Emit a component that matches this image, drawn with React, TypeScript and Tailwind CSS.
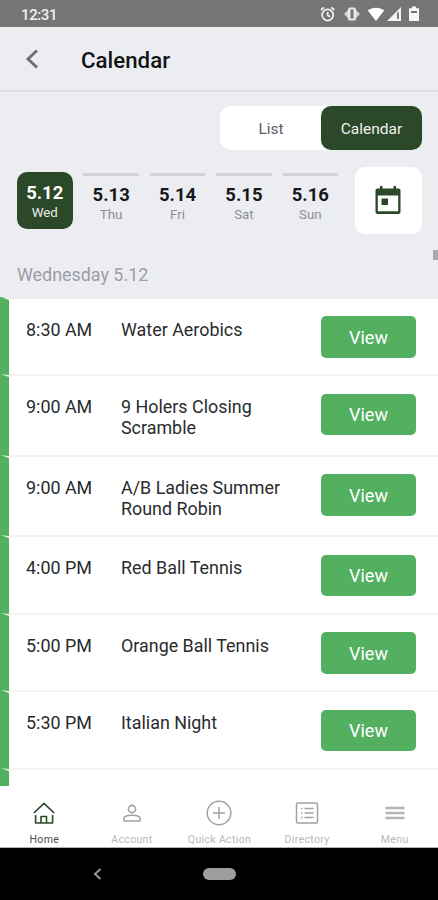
import clsx from "clsx";

interface Day {
  date: string;
  name: string;
}

interface CalendarEvent {
  time: string;
  lines: string[];
}

const days: Day[] = [
  { date: "5.12", name: "Wed" },
  { date: "5.13", name: "Thu" },
  { date: "5.14", name: "Fri" },
  { date: "5.15", name: "Sat" },
  { date: "5.16", name: "Sun" },
];

const events: CalendarEvent[] = [
  { time: "8:30 AM", lines: ["Water Aerobics"] },
  { time: "9:00 AM", lines: ["9 Holers Closing", "Scramble"] },
  { time: "9:00 AM", lines: ["A/B Ladies Summer", "Round Robin"] },
  { time: "4:00 PM", lines: ["Red Ball Tennis"] },
  { time: "5:00 PM", lines: ["Orange Ball Tennis"] },
  { time: "5:30 PM", lines: ["Italian Night"] },
];

function StatusBar() {
  return (
    <div className="flex h-[27px] shrink-0 items-center justify-between bg-[#757575] pt-[2px] pr-[19px] pl-[21px] text-[#f2f2f2]">
      <span className="pt-px text-[15px] leading-none font-medium tracking-[-0.4px]">12:31</span>
      <div className="flex items-center pb-[2px]">
        <svg className="h-[16px] w-[16px]" viewBox="0 0 24 24" fill="none" stroke="currentColor" strokeWidth="2.6">
          <circle cx="13" cy="13.5" r="8.3" />
          <path d="M13 9v5l3.5 2.2M3 6l4.5-4M23 6l-4.5-4" />
        </svg>
        <svg className="ml-[8px] h-[16px] w-[18px]" viewBox="0 0 18 16">
          <path d="M5.500 3.500L1 8l4.500 4.500zM12.500 3.500L17 8l-4.500 4.500z" fill="#d8d8d8" />
          <rect x="5" y="1.500" width="8" height="13" rx="1.500" fill="#e6e6e6" />
          <rect x="7.500" y="3.500" width="3" height="9" fill="#757575" />
        </svg>
        <svg className="ml-[6px] h-[16px] w-[18px]" viewBox="0 0 18 16" fill="white">
          <path d="M9 15L.8 4.6C5.2.8 12.8.8 17.2 4.6z" />
        </svg>
        <svg className="ml-px h-[16px] w-[16px]" viewBox="0 0 16 16">
          <path d="M1 15L15 1v14z" fill="#f2f2f2" />
          <path d="M11 6.300h1.800v6.700h-1.800z" fill="#757575" />
        </svg>
        <svg className="ml-[7px] h-[16px] w-[10px]" viewBox="0 0 10 16">
          <path d="M3 .5h4v1.800h3v12.700H0V2.300h3z" fill="#f7f7f7" />
          <path d="M2 5h6v2H2z" fill="#757575" />
        </svg>
      </div>
    </div>
  );
}

function Header() {
  return (
    <header className="flex h-[65px] shrink-0 items-center border-b-2 border-[#dfe0e2] pl-[25px]">
      <svg className="h-[20px] w-[13px] text-[#6d6e71]" viewBox="0 0 13 20" fill="none" stroke="currentColor" strokeWidth="2.900">
        <path d="M12 1.500L3 10l9 8.500" />
      </svg>
      <h1 className="ml-[43px] pt-[3px] text-[22.300px] leading-none font-medium text-[#121315]">Calendar</h1>
    </header>
  );
}

function ViewToggle() {
  return (
    <div className="ml-[220px] flex h-[44px] w-[202px] rounded-[10px] bg-white text-[15.500px]">
      <button type="button" className="w-[101px] pt-[3px] pl-px text-[#5c5d62]">
        List
      </button>
      <button type="button" className="w-[101px] rounded-[10px] bg-[#2b4829] pt-[3px] text-[#eef2ee]">
        Calendar
      </button>
    </div>
  );
}

function DayCell({ day, selected }: { day: Day; selected: boolean }) {
  return (
    <button
      type="button"
      className={clsx(
        "flex h-[57px] w-[55.500px] flex-col items-center",
        selected ? "rounded-[10px] bg-[#2b4829] text-white" : "text-[#17181b]"
      )}
    >
      <span className={clsx("mt-px h-[3px] w-full rounded-full", !selected && "bg-[#d1d2d5]")} />
      <span className={clsx("text-[18.500px] leading-[20px] font-bold", selected ? "mt-[7px]" : "mt-[9px]")}>
        {day.date}
      </span>
      <span className={clsx("text-[13.300px] leading-[20px]", selected ? "text-[#e8eee8]" : "text-[#8d8e93]")}>
        {day.name}
      </span>
    </button>
  );
}

function EventRow({ event }: { event: CalendarEvent }) {
  return (
    <div
      className={clsx(
        "relative flex shrink-0 border-b-2 border-[#f3f3f4] bg-white text-[17.900px] leading-[21px] text-[#2a2b2e]",
        event.lines.length > 1 ? "h-[80.500px]" : "h-[77.500px]"
      )}
    >
      <Stripe />
      <span className="w-[95px] pt-[20px] pl-[17px] whitespace-nowrap">{event.time}</span>
      <div className="w-[200px] pt-[20px] pl-[17px]">
        {event.lines.map((line) => (
          <p key={line} className="whitespace-nowrap">
            {line}
          </p>
        ))}
      </div>
      <button
        type="button"
        className="mt-[17.500px] ml-[17px] h-[41.500px] w-[95px] rounded-[5px] bg-[#54b061] pt-px text-[18px] text-white"
      >
        View
      </button>
    </div>
  );
}

// Green edge of a row; the top is cut on a slant and covers the row border.
function Stripe() {
  return (
    <span className="relative w-[9px] shrink-0">
      <span className="absolute -top-[2px] -bottom-[2px] left-0 w-[9px] bg-[#54b061] [clip-path:polygon(0_0,100%_2px,100%_100%,0_100%)]" />
      <svg className="absolute -top-[2px] left-0 h-[4px] w-[9px]" viewBox="0 0 9 4">
        <path d="M1 .3L9 1v2z" fill="#e6f4e2" />
      </svg>
    </span>
  );
}

const tabs = [
  {
    label: "Home",
    icon: (
      <svg className="h-[24px] w-[24px]" viewBox="0 0 24 24" fill="none" stroke="currentColor" strokeWidth="1.600" strokeLinejoin="round">
        <path d="M1.800 12L12 2.300 22.200 12M3.600 14v8h17v-8M9 22v-6.500h5.500V22" />
      </svg>
    ),
  },
  {
    label: "Account",
    icon: (
      <svg className="h-[24px] w-[24px]" viewBox="0 0 24 24" fill="none" stroke="currentColor" strokeWidth="1.600">
        <circle cx="12" cy="8" r="3.600" />
        <path d="M4 20v-2.500c0-2.200 4-3.300 8-3.300s8 1.100 8 3.300V20z" strokeLinejoin="round" />
      </svg>
    ),
  },
  {
    label: "Quick Action",
    icon: (
      <svg className="h-[26px] w-[26px]" viewBox="0 0 26 26" fill="none" stroke="currentColor" strokeWidth="1.500">
        <circle cx="13" cy="13" r="11.800" />
        <path d="M13 7v12M7 13h12" />
      </svg>
    ),
  },
  {
    label: "Directory",
    icon: (
      <svg className="h-[24px] w-[24px]" viewBox="0 0 24 24" fill="none" stroke="currentColor" strokeWidth="1.500">
        <rect x="1.500" y="2" width="21" height="20" rx="1.500" />
        <path d="M9.500 7.500h9M9.500 12h9M9.500 16.500h9M6 7.500h1.500M6 12h1.500M6 16.500h1.500" />
      </svg>
    ),
  },
  {
    label: "Menu",
    icon: (
      <svg className="h-[24px] w-[24px]" viewBox="0 0 24 24" fill="none" stroke="#b3b5b9" strokeWidth="2.600">
        <path d="M2.500 7h19M2.500 12h19M2.500 17h19" />
      </svg>
    ),
  },
];

function TabBar() {
  return (
    <nav className="grid h-[62px] shrink-0 grid-cols-5 border-b border-[#b0b0b0] bg-white">
      {tabs.map((tab, i) => (
        <a
          key={tab.label}
          className={clsx("flex flex-col items-center pt-[13.500px] pl-px", i === 0 ? "text-[#2b4829]" : "text-[#a0a2a7]")}
        >
          <span className="flex h-[26px] items-center">{tab.icon}</span>
          <span
            className={clsx(
              "mt-[8px] text-[10.500px] leading-[12px] tracking-[0.350px] whitespace-nowrap",
              i === 0 ? "text-[#4a4d4a]" : "text-[#b6b8bb]"
            )}
          >
            {tab.label}
          </span>
        </a>
      ))}
    </nav>
  );
}

function SystemNav() {
  return (
    <div className="flex h-[52px] shrink-0 items-center bg-black pl-[93px]">
      <svg className="h-[12px] w-[9px]" viewBox="0 0 9 12" fill="none" stroke="#999" strokeWidth="2">
        <path d="M7.500 1L2 6l5.500 5" />
      </svg>
      <span className="ml-[101px] h-[12px] w-[33px] rounded-full bg-[#9d9d9d]" />
    </div>
  );
}

export default function App() {
  return (
    <div className="flex h-[900px] w-[438px] flex-col overflow-hidden bg-[#ecedf1] font-['Roboto',sans-serif]">
      <StatusBar />
      <Header />
      <section className="relative h-[204.500px] shrink-0 pt-[14px]">
        <ViewToggle />
        <div className="mt-[17px] flex items-start pl-[17px]">
          <div className="flex gap-[10.900px] pt-[5px]">
            {days.map((day, i) => (
              <DayCell key={day.date} day={day} selected={i === 0} />
            ))}
          </div>
          <button
            type="button"
            aria-label="Pick a date"
            className="ml-[17px] flex h-[67px] w-[67px] items-center justify-center rounded-[10px] bg-white"
          >
            <svg className="h-[32px] w-[32px]" viewBox="0 0 32 32">
              <path
                d="M4.500 3.500h21a2 2 0 0 1 2 2v21.500a2 2 0 0 1-2 2h-21a2 2 0 0 1-2-2V5.500a2 2 0 0 1 2-2zM4.800 10.500v15.800h20.400V10.500z"
                fill="#2b4829"
                fillRule="evenodd"
              />
              <path d="M7 1h2.500v4H7zM20.500 1H23v4h-2.500zM8.500 13.500h6.500v6.500H8.500z" fill="#2b4829" />
            </svg>
          </button>
        </div>
        <h2 className="mt-[31px] pl-[17px] text-[17.900px] leading-[20px] text-[#9b9ca4]">Wednesday 5.12</h2>
        <span className="absolute top-[158px] right-0 h-[10px] w-[5px] bg-[#a7a8ab]" />
      </section>
      {/* 2px of padding keep the slanted tip of the first stripe visible */}
      <main className="flex h-[489.500px] shrink-0 flex-col overflow-hidden pt-[2px]">
        {events.map((event, i) => (
          <EventRow key={i} event={event} />
        ))}
        <div className="flex h-[23px] shrink-0 bg-white">
          <Stripe />
        </div>
      </main>
      <TabBar />
      <SystemNav />
    </div>
  );
}
